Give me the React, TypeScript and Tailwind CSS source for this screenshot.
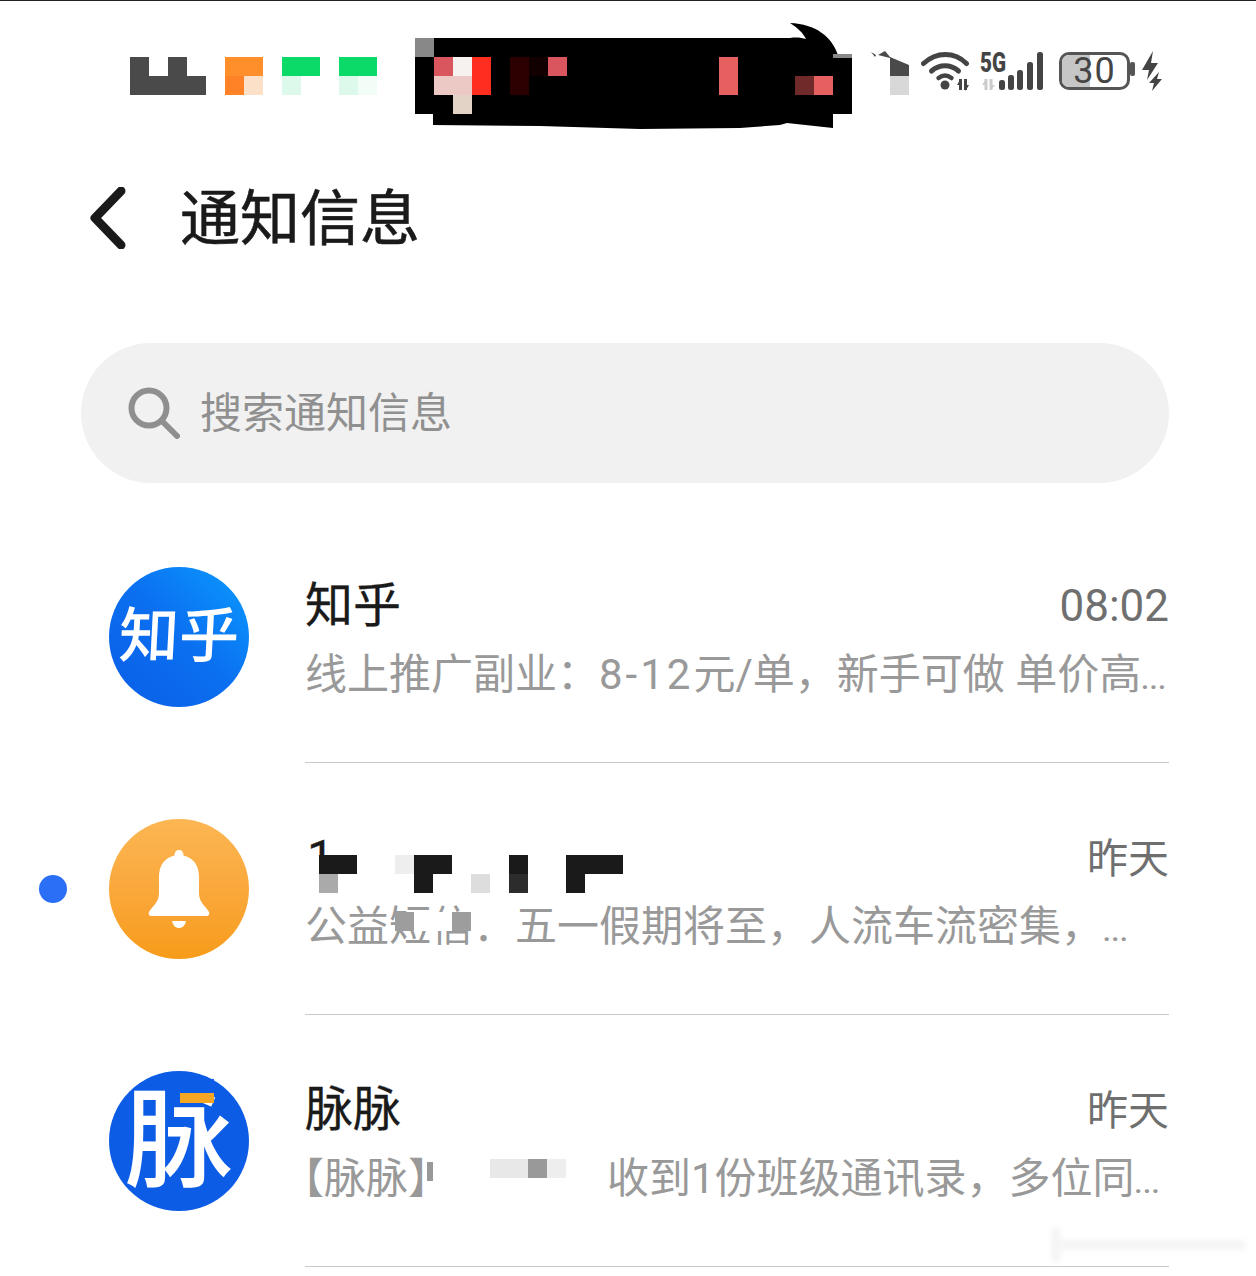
import React from 'react';

type Block = [number, number, number, number, string];

// mosaic patches are given relative to the svg box
const Mosaic: React.FC<{ width: number; height: number; blocks: Block[]; className?: string }> = ({
  width,
  height,
  blocks,
  className,
}) => (
  <svg width={width} height={height} viewBox={`0 0 ${width} ${height}`} className={className} shapeRendering="crispEdges">
    {blocks.map(([x, y, w, h, fill], i) => (
      <rect key={i} x={x} y={y} width={w} height={h} fill={fill} />
    ))}
  </svg>
);

const Redaction = () => (
  <svg width="723" height="110" viewBox="130 20 723 110" className="shrink-0">
    <g shapeRendering="crispEdges">
      <path d="M130 57h19v19h19V57h19v19h19v19h-76z" fill="#4a4a4a" />
      <rect x="225" y="57" width="38" height="19" fill="#ff8f2b" />
      <rect x="225" y="76" width="19" height="19" fill="#ff8227" />
      <rect x="244" y="76" width="19" height="19" fill="#fde0c8" />
      <rect x="282" y="57" width="38" height="19" fill="#0bd968" />
      <rect x="282" y="76" width="19" height="19" fill="#dcf9ec" />
      <rect x="339" y="57" width="38" height="19" fill="#0bd968" />
      <rect x="339" y="76" width="19" height="19" fill="#dcf9ec" />
      <rect x="358" y="76" width="19" height="19" fill="#f3fdf8" />
    </g>
    <path
      d="M415 57H433V38H790C797 37 802 38 806 39C803 33 798 28 790 23C816 24 832 37 838 55H852V114H833V128L787 123L780 125L740 128L640 129L540 126L433 125V114H415Z"
      fill="#000"
    />
    <g shapeRendering="crispEdges">
      <rect x="415" y="38" width="19" height="19" fill="#888" />
      <rect x="434" y="57" width="19" height="19" fill="#d9565e" />
      <rect x="453" y="57" width="19" height="19" fill="#f5f2ef" />
      <rect x="472" y="57" width="19" height="38" fill="#ff2d20" />
      <rect x="434" y="76" width="38" height="19" fill="#edc9c6" />
      <rect x="453" y="95" width="19" height="19" fill="#e3d3c6" />
      <rect x="510" y="57" width="19" height="38" fill="#2c0000" />
      <rect x="529" y="57" width="19" height="19" fill="#120000" />
      <rect x="548" y="57" width="19" height="19" fill="#d9565e" />
      <rect x="719" y="57" width="19" height="38" fill="#e5605f" />
      <rect x="795" y="76" width="19" height="19" fill="#702a2a" />
      <rect x="814" y="76" width="19" height="19" fill="#e5605f" />
      <rect x="833" y="54" width="19" height="4" fill="#888" />
    </g>
  </svg>
);

const StatusIcons = () => (
  <div className="flex items-start ml-[17px] mt-[30px]">
    <svg width="40" height="45" viewBox="870 50 40 45" className="shrink-0">
      <path d="M871 52l5 3-1 2zM878 55l7-4 5 6 19 8v11h-19V58z" fill="#4a4a4a" />
      <rect x="890" y="76" width="19" height="19" fill="#d8d8d8" shapeRendering="crispEdges" />
    </svg>
    <svg width="49" height="41" viewBox="921 51 49 41" className="ml-[11px] mt-[1px] shrink-0" fill="none" stroke="#444" strokeLinecap="round">
      <path d="M923.500 63.500c13-12 31-12 43 0" strokeWidth="5" />
      <path d="M931.500 71c8-7 19-7 27 0" strokeWidth="5" />
      <path d="M938.500 78c4-3 9-3 13 0" strokeWidth="4.500" />
      <circle cx="945" cy="85" r="4.500" fill="#444" stroke="none" />
      <path d="M960.500 79v11M965.500 79v11" strokeWidth="3" strokeLinecap="butt" />
      <path d="M957 85l3.500-6v6zM969 85l-3.500 6v-6z" fill="#444" stroke="none" />
    </svg>
    <svg width="66" height="47" viewBox="978 45 66 47" className="ml-[8px] -mt-[5px] shrink-0">
      <text x="980" y="72" fontFamily="Roboto, sans-serif" fontWeight="900" fontSize="27" fill="#444" textLength="26" lengthAdjust="spacingAndGlyphs">
        5G
      </text>
      <path d="M986 79v11M991 79v11" stroke="#ccc" strokeWidth="3" />
      <path d="M982 85l4-6v6zM995 85l-4 5v-5z" fill="#ccc" />
      <g fill="#444">
        <rect x="999" y="80" width="6" height="10" rx="2.500" />
        <rect x="1008" y="75" width="6" height="15" rx="2.500" />
        <rect x="1017" y="70" width="6" height="20" rx="2.500" />
        <rect x="1027" y="62" width="6" height="28" rx="2.500" />
        <rect x="1037" y="52" width="6" height="38" rx="2.500" />
      </g>
    </svg>
    <div className="relative ml-[15px] mt-[2px] w-[71px] h-[38px] shrink-0 rounded-[10px] border-[3px] border-[#555] flex items-center justify-center">
      <div className="absolute left-0 top-0 bottom-0 w-[28px] rounded-l-[7px] bg-[#c6c6c6]" />
      <span className="relative text-[36px] leading-none tracking-[1px] text-[#444]">30</span>
    </div>
    <div className="mt-[12px] w-[5px] h-[14px] rounded-[2px] bg-[#555] shrink-0" />
    <svg width="22" height="42" viewBox="1142 51 22 42" className="ml-[6px] -translate-x-[1px] shrink-0">
      <path d="M1155 52L1144 71H1151L1149 81L1160 64H1153Z" fill="#444" />
      <path d="M1161 73L1151 84H1156L1154 92L1164 80H1159Z" fill="#444" />
    </svg>
  </div>
);

const ZhihuAvatar = () => (
  <div className="w-[140px] h-[140px] rounded-full shrink-0 flex items-center justify-center bg-[linear-gradient(225deg,#0a9bff,#0b6ff0_50%,#0a5ee6)]">
    <span className="text-white font-medium text-[60px] leading-none -skew-x-3">知乎</span>
  </div>
);

const BellAvatar = () => (
  <div className="w-[140px] h-[140px] rounded-full shrink-0 flex items-center justify-center bg-gradient-to-b from-[#fcb653] to-[#f79b17]">
    <svg width="66" height="80" viewBox="0 0 66 80" fill="#fff">
      <path d="M33 1c3 0 4.500 2 4.500 5.500 11 2.500 15.500 11 15.500 21.500v16c0 9 6 13 9.500 18 1.500 2.500 1 5-2 5H5.500c-3 0-3.500-2.500-2-5 3.500-5 9.500-9 9.500-18V28c0-10.500 4.500-19 15.500-21.500C28.500 3 30 1 33 1z" />
      <path d="M26 72h14c-1 4.500-3.500 7-7 7s-6-2.500-7-7z" />
    </svg>
  </div>
);

const MaimaiAvatar = () => (
  <div className="relative w-[140px] h-[140px] rounded-full shrink-0 flex items-center justify-center bg-[#0c5ce6]">
    <span className="text-white font-medium text-[108px] leading-none">脉</span>
    <div className="absolute left-[71px] top-[8px] w-[34px] h-[14px] bg-[#0c5ce6]" />
    <div className="absolute left-[71px] top-[22px] w-[34px] h-[10px] bg-[#f5a623]" />
  </div>
);

const Dots = () => <span className="text-[26px] font-bold tracking-[1px]">...</span>;

interface NoticeRowProps {
  avatar: React.ReactNode;
  title: React.ReactNode;
  time: React.ReactNode;
  preview: React.ReactNode;
  unread?: boolean;
}

const NoticeRow: React.FC<NoticeRowProps> = ({ avatar, title, time, preview, unread }) => (
  <div className="flex h-[252px] pl-[39px] pr-[87px]">
    <div className="w-[28px] mr-[42px] shrink-0 pt-[112px]">
      {unread && <div className="w-[28px] h-[28px] rounded-full bg-[#2a6ff5]" />}
    </div>
    <div className="pt-[56px] shrink-0">{avatar}</div>
    <div className="flex-1 ml-[56px] border-b border-[#c9c9c9] pt-[63px] min-w-0">
      <div className="relative flex items-center justify-between h-[64px]">
        <div className="text-[48px] leading-[64px] text-[#1a1a1a] [-webkit-text-stroke:0.3px_#1a1a1a]">{title}</div>
        <div className="text-[#6f6f6f]">{time}</div>
      </div>
      <div className="relative mt-[7px] h-[60px] text-[42px] leading-[60px] text-[#999] whitespace-nowrap">{preview}</div>
    </div>
  </div>
);

const Yesterday = () => <span className="block text-[41px] leading-[64px] translate-y-[1px]">昨天</span>;

export default function App() {
  return (
    <div className="relative w-[1256px] h-[1276px] bg-white overflow-hidden font-[Roboto,'Noto_Sans_CJK_SC',sans-serif]">
      <div className="h-px bg-[#222]" />

      <div className="flex items-start pl-[130px] pt-[19px] h-[139px]">
        <Redaction />
        <StatusIcons />
      </div>

      <div className="flex items-center pl-[90px] pt-[2px] h-[154px]">
        <svg width="36" height="62" viewBox="0 0 36 62" fill="none" stroke="#1a1a1a" strokeWidth="9" strokeLinecap="round" strokeLinejoin="round">
          <path d="M31 4L5 31l26 27" />
        </svg>
        <h1 className="ml-[54px] mt-[3px] text-[60px] leading-none font-normal text-[#1a1a1a] [-webkit-text-stroke:0.6px_#1a1a1a]">通知信息</h1>
      </div>

      <div className="ml-[81px] mt-[49px] w-[1088px] h-[140px] rounded-full bg-[#f1f1f1] flex items-center pl-[47px]">
        <svg width="52" height="52" viewBox="0 0 52 52" fill="none" stroke="#8f8f8f" strokeWidth="6" strokeLinecap="round">
          <circle cx="21" cy="21" r="17.500" />
          <path d="M34 34l15 15" />
        </svg>
        <span className="ml-[20px] text-[42px] text-[#909090]">搜索通知信息</span>
      </div>

      <div className="mt-[28px]">
        <NoticeRow
          avatar={<ZhihuAvatar />}
          title="知乎"
          time={<span className="block text-[44px] leading-[64px]">08:02</span>}
          preview={
            <>
              线上推广副业：<span className="tracking-[3px]">8-12</span>元/单，新手可做 单价高
              <Dots />
            </>
          }
        />
        <NoticeRow
          unread
          avatar={<BellAvatar />}
          title={
            <>
              <span className="ml-[2px]">1</span>
              <Mosaic
                width={304}
                height={38}
                className="absolute left-[14px] top-[29px]"
                blocks={[
                  [0, 0, 38, 19, '#1a1a1a'],
                  [0, 19, 19, 19, '#aaaaaa'],
                  [76, 0, 19, 19, '#eeeeee'],
                  [95, 0, 38, 19, '#1a1a1a'],
                  [95, 19, 19, 19, '#1a1a1a'],
                  [152, 19, 19, 19, '#dddddd'],
                  [190, 0, 19, 19, '#1a1a1a'],
                  [190, 19, 19, 19, '#2c2c2c'],
                  [247, 0, 57, 19, '#1a1a1a'],
                  [247, 19, 19, 19, '#1a1a1a'],
                ]}
              />
            </>
          }
          time={<Yesterday />}
          preview={
            <>
              公益短信：五一假期将至，人流车流密集，
              <Dots />
              <Mosaic
                width={100}
                height={20}
                className="absolute left-[90px] top-[15px]"
                blocks={[
                  [0, 0, 19, 19, '#9d9d9d'],
                  [19, 0, 38, 19, '#ffffff'],
                  [57, 0, 19, 19, '#9d9d9d'],
                  [76, 0, 24, 19, '#ffffff'],
                ]}
              />
            </>
          }
        />
        <NoticeRow
          avatar={<MaimaiAvatar />}
          title="脉脉"
          time={<Yesterday />}
          preview={
            <>
              <span className="-ml-[23px]">【脉脉】</span>
              <span className="absolute left-[302px] top-0">
                收到1份班级通讯录，多位同
                <Dots />
              </span>
              <Mosaic
                width={262}
                height={24}
                className="absolute left-[122px] top-[10px]"
                blocks={[
                  [0, 3, 6, 19, '#999999'],
                  [63, 0, 38, 19, '#e8e8e8'],
                  [101, 0, 19, 19, '#999999'],
                  [120, 0, 19, 19, '#eeeeee'],
                ]}
              />
            </>
          }
        />
      </div>

      <div className="absolute left-[1060px] top-[1241px] w-[185px] h-[8px] bg-[#f2f2f2] blur-[3px]" />
      <div className="absolute left-[1052px] top-[1228px] w-[8px] h-[34px] bg-[#f3f3f3] blur-[3px]" />
    </div>
  );
}
